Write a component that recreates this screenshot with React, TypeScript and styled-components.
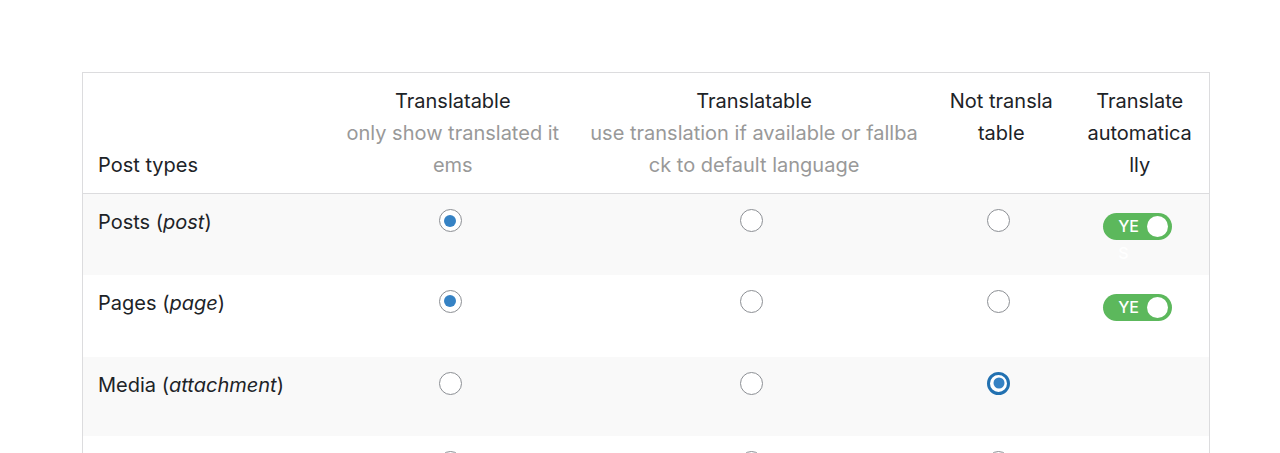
import React from 'react';
import styled, { createGlobalStyle } from 'styled-components';

const GlobalStyle = createGlobalStyle`
    body {
        margin: 0;
        background: #ffffff;
        font-family: Inter, "Noto Sans", sans-serif;
        color: #1d2327;
    }
`;

const Page = styled.div`
    padding: 72px 70px 0 82px;
    height: 453px;
    box-sizing: border-box;
    overflow: hidden;
`;

const Table = styled.table`
    width: 1128px;
    border: 1px solid #dcdcde;
    border-collapse: collapse;
    table-layout: fixed;
    font-size: 20px;
    line-height: 32px;
`;

// wrap: 'all' breaks anywhere, 'word' only breaks a word that does not fit
const HeadCell = styled.th<{ w: number; left?: boolean; pad?: number; wrap?: 'all' | 'word' }>`
    width: ${({ w }) => w}px;
    padding: 12px ${({ pad }) => pad ?? 15}px;
    font-weight: 400;
    text-align: ${({ left }) => (left ? 'left' : 'center')};
    vertical-align: bottom;
    word-break: ${({ wrap }) => (wrap === 'word' ? 'normal' : 'break-all')};
    overflow-wrap: anywhere;
    border-bottom: 1px solid #dcdcde;
    box-sizing: border-box;
`;

const HeadInner = styled.div`
    display: flex;
    flex-direction: column;
    justify-content: flex-start;
    height: 96px;
`;

const Sub = styled.span`
    color: #999999;
`;

const Row = styled.tr<{ alt: boolean; h: number }>`
    background: ${({ alt }) => (alt ? '#f9f9f9' : '#ffffff')};
    height: ${({ h }) => h}px;
`;

const Cell = styled.td<{ left?: boolean }>`
    padding: 12px 15px;
    vertical-align: top;
    text-align: ${({ left }) => (left ? 'left' : 'center')};
    box-sizing: border-box;
`;

const Radio = styled.span<{ checked?: boolean; focus?: boolean }>`
    display: inline-block;
    width: 23px;
    height: 23px;
    margin: 3px 5px 0 0;
    box-sizing: border-box;
    border-radius: 50%;
    background: #ffffff;
    border: ${({ focus }) => (focus ? '3px solid #2271b1' : '1.5px solid #8c8f94')};
    position: relative;
    &::after {
        content: '';
        display: ${({ checked }) => (checked ? 'block' : 'none')};
        position: absolute;
        width: ${({ focus }) => (focus ? 11 : 12)}px;
        height: ${({ focus }) => (focus ? 11 : 12)}px;
        border-radius: 50%;
        background: #3582c4;
        left: 50%;
        top: 50%;
        transform: translate(-50%, -50%);
    }
`;

const Toggle = styled.span`
    display: block;
    position: relative;
    width: 69px;
    height: 27px;
    margin: 7px auto 0 auto;
    left: -2px;
    border-radius: 14px;
    background: #5cb85c;
    color: #ffffff;
    font-size: 16px;
    font-weight: 500;
    line-height: 27px;
    text-align: left;
    box-sizing: border-box;
    padding: 0 30px 0 15px;
    word-break: break-all;
    &::after {
        content: '';
        position: absolute;
        right: 4px;
        top: 3px;
        width: 21px;
        height: 21px;
        border-radius: 50%;
        background: #ffffff;
    }
`;

type Item = { label: string; slug: string; choice: number; auto: boolean; h: number };

const rows: Item[] = [
    { label: 'Posts', slug: 'post', choice: 0, auto: true, h: 81 },
    { label: 'Pages', slug: 'page', choice: 0, auto: true, h: 82 },
    { label: 'Media', slug: 'attachment', choice: 2, auto: false, h: 79 },
    { label: 'Products', slug: 'product', choice: 0, auto: true, h: 82 },
];

const App: React.FC = () => {
    return (
        <Page>
            <GlobalStyle />
            <Table>
                <thead>
                    <tr>
                        <HeadCell w={247} left>Post types</HeadCell>
                        <HeadCell w={246}>
                            <HeadInner>
                                <span>Translatable</span>
                                <Sub>only show translated items</Sub>
                            </HeadInner>
                        </HeadCell>
                        <HeadCell w={356} pad={12}>
                            <HeadInner>
                                <span>Translatable</span>
                                <Sub>use translation if available or fallback to default language</Sub>
                            </HeadInner>
                        </HeadCell>
                        <HeadCell w={138}>
                            <HeadInner>Not translatable</HeadInner>
                        </HeadCell>
                        <HeadCell w={139} pad={16} wrap="word">
                            <HeadInner>Translate automatically</HeadInner>
                        </HeadCell>
                    </tr>
                </thead>
                <tbody>
                    {rows.map((r, i) => (
                        <Row key={r.slug} alt={i % 2 === 0} h={r.h}>
                            <Cell left>
                                {r.label} (<em>{r.slug}</em>)
                            </Cell>
                            <Cell><Radio checked={r.choice === 0} /></Cell>
                            <Cell><Radio checked={r.choice === 1} /></Cell>
                            <Cell><Radio checked={r.choice === 2} focus={r.choice === 2} /></Cell>
                            <Cell>{r.auto && <Toggle>YES</Toggle>}</Cell>
                        </Row>
                    ))}
                </tbody>
            </Table>
        </Page>
    );
};

export default App;
